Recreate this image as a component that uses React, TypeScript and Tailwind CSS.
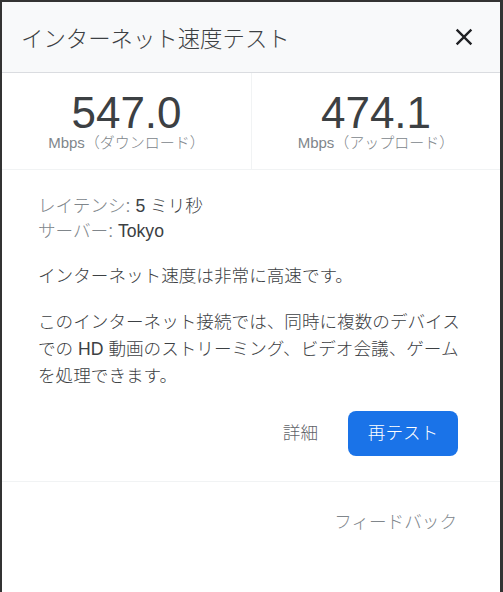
import React from "react";

const font = { fontFamily: '"Liberation Sans", "Noto Sans CJK JP", sans-serif' };

export default function App() {
  return (
    <div
      className="w-[503px] h-[592px] bg-[#333333] pt-[2px] pl-[2px] pr-[3px] overflow-hidden font-light"
      style={font}
    >
      <div className="bg-white h-full flex flex-col">
        <div className="h-[71px] shrink-0 bg-[#f8f9fa] border-b border-[#dadce0] flex items-center justify-between pl-[19px] pr-[22px]">
          <div className="text-[22.4px] leading-[28px] text-[#3c4043] pt-[6px]">
            インターネット速度テスト
          </div>
          <svg width="28" height="28" viewBox="0 0 24 24" className="mt-[-1px]">
            <path
              fill="#202124"
              d="M19 6.41L17.59 5 12 10.59 6.41 5 5 6.41 10.59 12 5 17.59 6.41 19 12 13.41 17.59 19 19 17.59 13.41 12z"
            />
          </svg>
        </div>

        <div className="h-[97px] shrink-0 flex border-b border-[#f1f3f4]">
          <div className="w-[250px] border-r border-[#f1f3f4] flex flex-col items-center pt-[19px]">
            <div className="text-[44px] leading-[42px] text-[#3c4043]">547.0</div>
            <div className="text-[15px] leading-[18px] text-[#80868b]">
              Mbps（ダウンロード）
            </div>
          </div>
          <div className="flex-1 flex flex-col items-center pt-[19px]">
            <div className="text-[44px] leading-[42px] text-[#3c4043]">474.1</div>
            <div className="text-[15px] leading-[18px] text-[#80868b]">
              Mbps（アップロード）
            </div>
          </div>
        </div>

        <div className="pl-[36px] pr-[42px] pt-[24px] pb-[25px] border-b border-[#f1f3f4] text-[17.6px] text-[#3c4043]">
          <div className="leading-[25px]">
            <span className="text-[#80868b]">レイテンシ:</span> 5 ミリ秒
          </div>
          <div className="leading-[25px]">
            <span className="text-[#80868b]">サーバー:</span> Tokyo
          </div>
          <div className="leading-[27px] mt-[19px]">インターネット速度は非常に高速です。</div>
          <div className="leading-[27px] mt-[19px] whitespace-nowrap">
            このインターネット接続では、同時に複数のデバイス
            <br />
            での HD 動画のストリーミング、ビデオ会議、ゲーム
            <br />
            を処理できます。
          </div>
          <div className="flex justify-end items-center gap-[30px] mt-[21px]">
            <div className="text-[#5f6368] text-[17.6px]">詳細</div>
            <div className="h-[45px] w-[110px] rounded-[8px] bg-[#1a73e8] text-white flex items-center justify-center text-[17.6px]">
              再テスト
            </div>
          </div>
        </div>

        <div className="pr-[43px] pt-[27px] flex justify-end">
          <div className="text-[17.6px] leading-[26px] text-[#80868b]">フィードバック</div>
        </div>
      </div>
    </div>
  );
}
